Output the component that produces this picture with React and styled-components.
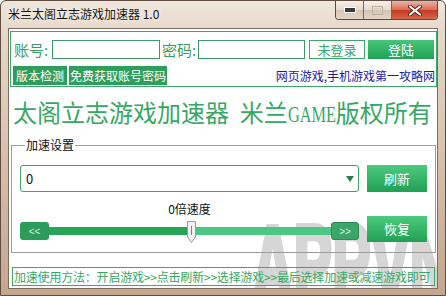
import React from "react";
import styled, { createGlobalStyle } from "styled-components";

const GlobalStyle = createGlobalStyle`
  html, body { margin: 0; padding: 0; background: #fff; }
  body { font-family: "Noto Sans CJK SC", "Noto Sans", sans-serif; }
  * { box-sizing: border-box; }
`;

const GREEN = "#36a865";

const Window = styled.div`
  width: 446px;
  height: 296px;
  display: flex;
  flex-direction: column;
  border: 1px solid #5e4d40;
  border-radius: 6px 6px 0 0;
  overflow: hidden;
  background: linear-gradient(180deg, #f0e6dc 0, #e7d9cb 28px, #d4bca6 60%, #c4a78f 100%);
`;

const TitleBar = styled.div`
  height: 27px;
  display: flex;
  align-items: flex-start;
  padding: 0 7px;
  flex: none;
`;

const TitleText = styled.div`
  font-size: 12px;
  line-height: 26px;
  color: #151515;
  text-shadow: 0 0 6px rgba(255, 255, 255, 0.95);
`;

const Caption = styled.div`
  margin-left: auto;
  display: flex;
  height: 19px;
  border: 1px solid #5c4a3e;
  border-top: none;
  border-radius: 0 0 4px 4px;
  overflow: hidden;
`;

const CapBtn = styled.div`
  width: ${(p) => p.$w}px;
  height: 100%;
  display: flex;
  align-items: center;
  justify-content: center;
  border-left: ${(p) => (p.$first ? "none" : "1px solid #7a6658")};
  background: ${(p) =>
    p.$close
      ? "linear-gradient(180deg, #eab3a5 0%, #da6d55 48%, #c43c22 52%, #d2674c 100%)"
      : "linear-gradient(180deg, #f7f1ea 0%, #e6d9cd 48%, #d6c5b6 52%, #e3d5c8 100%)"};
`;

const Body = styled.div`
  flex: 1;
  display: flex;
  padding: 0 7px 6px 7px;
`;

const Client = styled.div`
  flex: 1;
  position: relative;
  z-index: 0;
  background: #fff;
  border: 1px solid #7d6d60;
  display: flex;
  flex-direction: column;
  overflow: hidden;
`;

const Watermark = styled.div`
  position: absolute;
  z-index: -1;
  left: 243px;
  top: 180px;
  font-family: "Liberation Sans", sans-serif;
  font-weight: 700;
  font-size: 110px;
  line-height: 1;
  letter-spacing: 1px;
  color: #d6d6d6;
  -webkit-text-stroke: 6px #d6d6d6;
  transform: scaleX(0.52);
  transform-origin: left top;
  white-space: nowrap;
  pointer-events: none;
`;

const Panel = styled.div`
  margin: 2px 0 0 1px;
  height: 56px;
  border: 1px solid #3aa866;
  padding: 8px 0 1px 2px;
  display: flex;
  flex-direction: column;
  gap: 7px;
`;

const Row = styled.div`
  display: flex;
  align-items: center;
  height: 19px;
  gap: ${(p) => p.$gap || 0}px;
  padding-left: ${(p) => p.$pl || 0}px;
`;

const FieldLabel = styled.div`
  width: 38px;
  padding-left: ${(p) => p.$pl || 0}px;
  font-size: 15px;
  line-height: 19px;
  color: #3a9c62;
  white-space: nowrap;
`;

const TextBox = styled.input`
  width: ${(p) => p.$w}px;
  height: 19px;
  margin: 0;
  padding: 0 2px;
  border: 1px solid #3c9a68;
  background: #fff;
  font-size: 12px;
  outline: none;
`;

const OutlineButton = styled.div`
  width: 56px;
  height: 19px;
  margin-left: 4px;
  border: 1px solid #3aa866;
  background: #fff;
  color: ${GREEN};
  font-size: 13px;
  line-height: 17px;
  text-align: center;
`;

const LoginButton = styled.div`
  width: 66px;
  height: 19px;
  margin-left: 3px;
  background: linear-gradient(180deg, #45c577 0%, #22a255 100%);
  color: #fff;
  font-size: 13px;
  line-height: 19px;
  text-align: center;
`;

const SmallButton = styled.div`
  height: 19px;
  padding: 0 ${(p) => p.$px}px;
  background: #2e9e5c;
  color: #fff;
  font-size: 12px;
  line-height: 19px;
  white-space: nowrap;
`;

const SiteLink = styled.div`
  margin-left: auto;
  padding-right: 1px;
  color: #1a1aa8;
  font-size: 12px;
  line-height: 19px;
  white-space: nowrap;
`;

const Heading = styled.div`
  margin: 11px 0 0 4px;
  font-size: 24px;
  line-height: 28px;
  color: ${GREEN};
  white-space: pre;
`;

const Latin = styled.span`
  display: inline-block;
  font-family: "Liberation Serif", serif;
  transform: scaleX(0.68);
  transform-origin: left center;
  margin-right: -22.6px;
`;

const Group = styled.fieldset`
  margin: 10px 1px 0 2px;
  border: 1px solid #9c9c9c;
  padding: 13px 9px 10px 8px;
  min-width: 0;
`;

const Legend = styled.legend`
  font-size: 12px;
  line-height: 14px;
  padding: 0 1px;
  margin-left: 5px;
  color: #111;
`;

const GroupGrid = styled.div`
  display: grid;
  grid-template-columns: 339px 60px;
  column-gap: 8px;
  row-gap: 10px;
`;

const Combo = styled.div`
  height: 27px;
  display: flex;
  align-items: center;
  justify-content: space-between;
  padding: 0 4px 0 5px;
  border: 1px solid #3ea469;
  border-radius: 3px;
  font-size: 13px;
  color: #111;
`;

const GreenButton = styled.div`
  height: ${(p) => p.$h}px;
  align-self: end;
  background: linear-gradient(180deg, #4ccb7e 0%, #21a055 100%);
  color: #fff;
  font-size: 13px;
  line-height: ${(p) => p.$h}px;
  text-align: center;
`;

const SliderBlock = styled.div`
  display: flex;
  flex-direction: column;
`;

const SpeedLabel = styled.div`
  font-size: 12px;
  line-height: 14px;
  text-align: center;
  color: #111;
`;

const SliderRow = styled.div`
  margin-top: 4px;
  height: 22px;
  display: flex;
  align-items: center;
`;

const ArrowBtn = styled.div`
  width: ${(p) => p.$w}px;
  height: 18px;
  border-radius: 3px;
  background: ${(p) => (p.$light ? "#3aa66a" : "#2c9c5a")};
  border: ${(p) => (p.$light ? "1px solid #2b8a55" : "none")};
  color: #d6f2e0;
  font-family: "Liberation Sans", sans-serif;
  font-size: 10px;
  display: flex;
  align-items: center;
  justify-content: center;
  flex: none;
`;

const Track = styled.div`
  flex: 1;
  height: 8px;
  background: #4cc783;
  position: relative;
`;

const Fill = styled.div`
  height: 100%;
  width: ${(p) => p.$pct}%;
  background: #26a458;
`;

const Thumb = styled.svg`
  position: absolute;
  top: -6px;
  left: calc(${(p) => p.$pct}% - 4.5px);
`;

const Status = styled.div`
  margin: 14px 2px 0 3px;
  height: 19px;
  border: 1px solid #3aa866;
  padding-left: 1px;
  font-size: 12px;
  line-height: 17px;
  letter-spacing: -0.2px;
  color: ${GREEN};
  white-space: nowrap;
  overflow: hidden;
`;

export default function App() {
  const pct = 50.4;
  return (
    <>
      <GlobalStyle />
      <Window>
        <TitleBar>
          <TitleText>米兰太阁立志游戏加速器 1.0</TitleText>
          <Caption>
            <CapBtn $w={27} $first>
              <svg width="12" height="6" viewBox="0 0 12 6">
                <rect x="0.5" y="0.5" width="11" height="5" fill="#3a3a3a" stroke="#fff" />
              </svg>
            </CapBtn>
            <CapBtn $w={28}>
              <svg width="11" height="9" viewBox="0 0 11 9">
                <rect x="0.5" y="0.5" width="10" height="8" fill="none" stroke="#bfae9e" />
                <rect x="2.5" y="2.5" width="6" height="4" fill="none" stroke="#d8cabd" />
              </svg>
            </CapBtn>
            <CapBtn $w={46} $close>
              <svg width="14" height="11" viewBox="0 0 14 11">
                <path d="M2 1.5 L12 9.5 M12 1.5 L2 9.5" stroke="#5a1a10" strokeWidth="4" strokeLinecap="round" />
                <path d="M2 1.5 L12 9.5 M12 1.5 L2 9.5" stroke="#fff" strokeWidth="2.2" strokeLinecap="round" />
              </svg>
            </CapBtn>
          </Caption>
        </TitleBar>
        <Body>
          <Client>
            <Watermark aria-hidden="true">APPVN</Watermark>
            <Panel>
              <Row $pl={1}>
                <FieldLabel>账号:</FieldLabel>
                <TextBox $w={108} />
                <FieldLabel $pl={2}>密码:</FieldLabel>
                <TextBox $w={107} type="password" />
                <OutlineButton>未登录</OutlineButton>
                <LoginButton>登陆</LoginButton>
              </Row>
              <Row $gap={2}>
                <SmallButton $px={3}>版本检测</SmallButton>
                <SmallButton $px={1}>免费获取账号密码</SmallButton>
                <SiteLink>网页游戏,手机游戏第一攻略网</SiteLink>
              </Row>
            </Panel>
            <Heading>
              {"太阁立志游戏加速器  米兰"}
              <Latin>GAME</Latin>
              {"版权所有"}
            </Heading>
            <Group>
              <Legend>加速设置</Legend>
              <GroupGrid>
                <Combo>
                  <span>0</span>
                  <svg width="8" height="6" viewBox="0 0 8 6">
                    <path d="M0 0 H8 L4 6 Z" fill="#2a7d4c" />
                  </svg>
                </Combo>
                <GreenButton $h={27}>刷新</GreenButton>
                <SliderBlock>
                  <SpeedLabel>0倍速度</SpeedLabel>
                  <SliderRow>
                    <ArrowBtn $w={29}>&lt;&lt;</ArrowBtn>
                    <Track>
                      <Fill $pct={pct} />
                      <Thumb $pct={pct} width="9" height="22" viewBox="0 0 9 22">
                        <path d="M0.5 0.5 H8.5 V16 L4.5 21.5 L0.5 16 Z" fill="#f3f3f3" stroke="#9a9a9a" />
                        <path d="M4.5 5 V14" stroke="#3aa866" strokeWidth="1" />
                      </Thumb>
                    </Track>
                    <ArrowBtn $w={28} $light>&gt;&gt;</ArrowBtn>
                  </SliderRow>
                </SliderBlock>
                <GreenButton $h={26}>恢复</GreenButton>
              </GroupGrid>
            </Group>
            <Status>加速使用方法：开启游戏&gt;&gt;点击刷新&gt;&gt;选择游戏&gt;&gt;最后选择加速或减速游戏即可</Status>
          </Client>
        </Body>
      </Window>
    </>
  );
}
